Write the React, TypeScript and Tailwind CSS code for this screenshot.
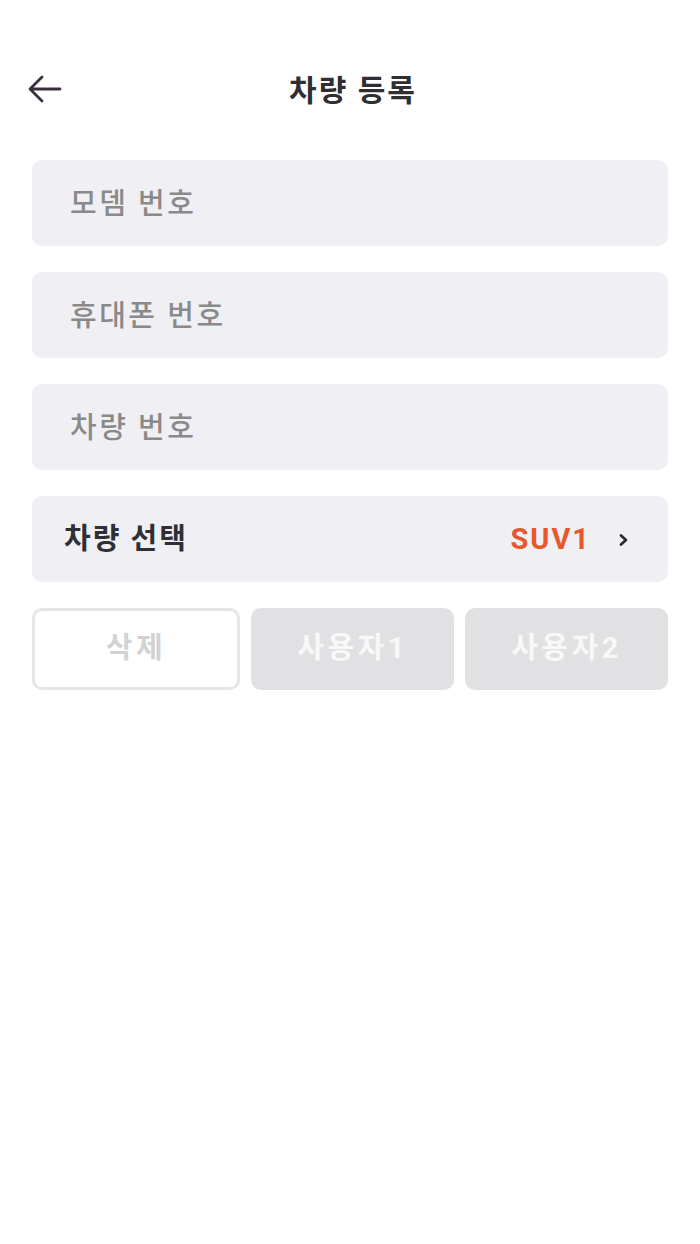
const font = { fontFamily: 'Roboto, "Noto Sans CJK KR", "Noto Sans", sans-serif' };

function InputRow({ label }: { label: string }) {
  return (
    <div className="h-[86px] rounded-[10px] bg-[#f0f0f4] flex items-center pl-[38px] pt-[4px] text-[29px] tracking-[2.5px] font-medium text-[#8a8a8a]">
      {label}
    </div>
  );
}

export default function App() {
  return (
    <div className="w-[700px] h-[1244px] bg-white" style={font}>
      {/* header */}
      <div className="relative h-[88px] mt-[46px] flex items-center justify-center">
        <button className="absolute left-[28px] top-[29px]">
          <svg width="34" height="28" viewBox="0 0 34 28" fill="none">
            <path
              d="M32 14H3M14 2L2 14l12 12"
              stroke="#3a2f3d"
              strokeWidth="2.8"
              strokeLinecap="round"
              strokeLinejoin="round"
            />
          </svg>
        </button>
        <h1 className="text-[30px] tracking-[2px] font-bold text-[#2e2e33] ml-[6px]">차량 등록</h1>
      </div>

      <div className="px-[32px] pt-[26px] flex flex-col gap-[26px]">
        <InputRow label="모뎀 번호" />
        <InputRow label="휴대폰 번호" />
        <InputRow label="차량 번호" />

        <div className="h-[86px] rounded-[10px] bg-[#f0f0f4] flex items-center pl-[32px] pr-[38px] pt-[2px]">
          <span className="text-[29px] tracking-[2px] font-bold text-[#2f2f35]">차량 선택</span>
          <span className="ml-auto text-[29px] tracking-[2px] font-bold text-[#e6582c]">SUV1</span>
          <svg className="ml-[27px]" width="12" height="14" viewBox="0 0 12 14" fill="none">
            <path d="M3 2.5l5 4.5-5 4.5" stroke="#2f2a3a" strokeWidth="2.8" strokeLinecap="round" strokeLinejoin="round" />
          </svg>
        </div>
      </div>

      <div className="px-[32px] mt-[26px] grid grid-cols-[208px_1fr_1fr] gap-[11px]">
        <button className="h-[82px] rounded-[10px] border-[3px] border-[#e6e6e8] bg-white text-[29px] tracking-[3.5px] font-bold text-[#d2d2d4]">
          삭제
        </button>
        <button className="h-[82px] rounded-[10px] bg-[#e1e1e3] text-[29px] tracking-[3.5px] font-bold text-[#f8f8f9]">
          사용자1
        </button>
        <button className="h-[82px] rounded-[10px] bg-[#e1e1e3] text-[29px] tracking-[3.5px] font-bold text-[#f8f8f9]">
          사용자2
        </button>
      </div>
    </div>
  );
}
